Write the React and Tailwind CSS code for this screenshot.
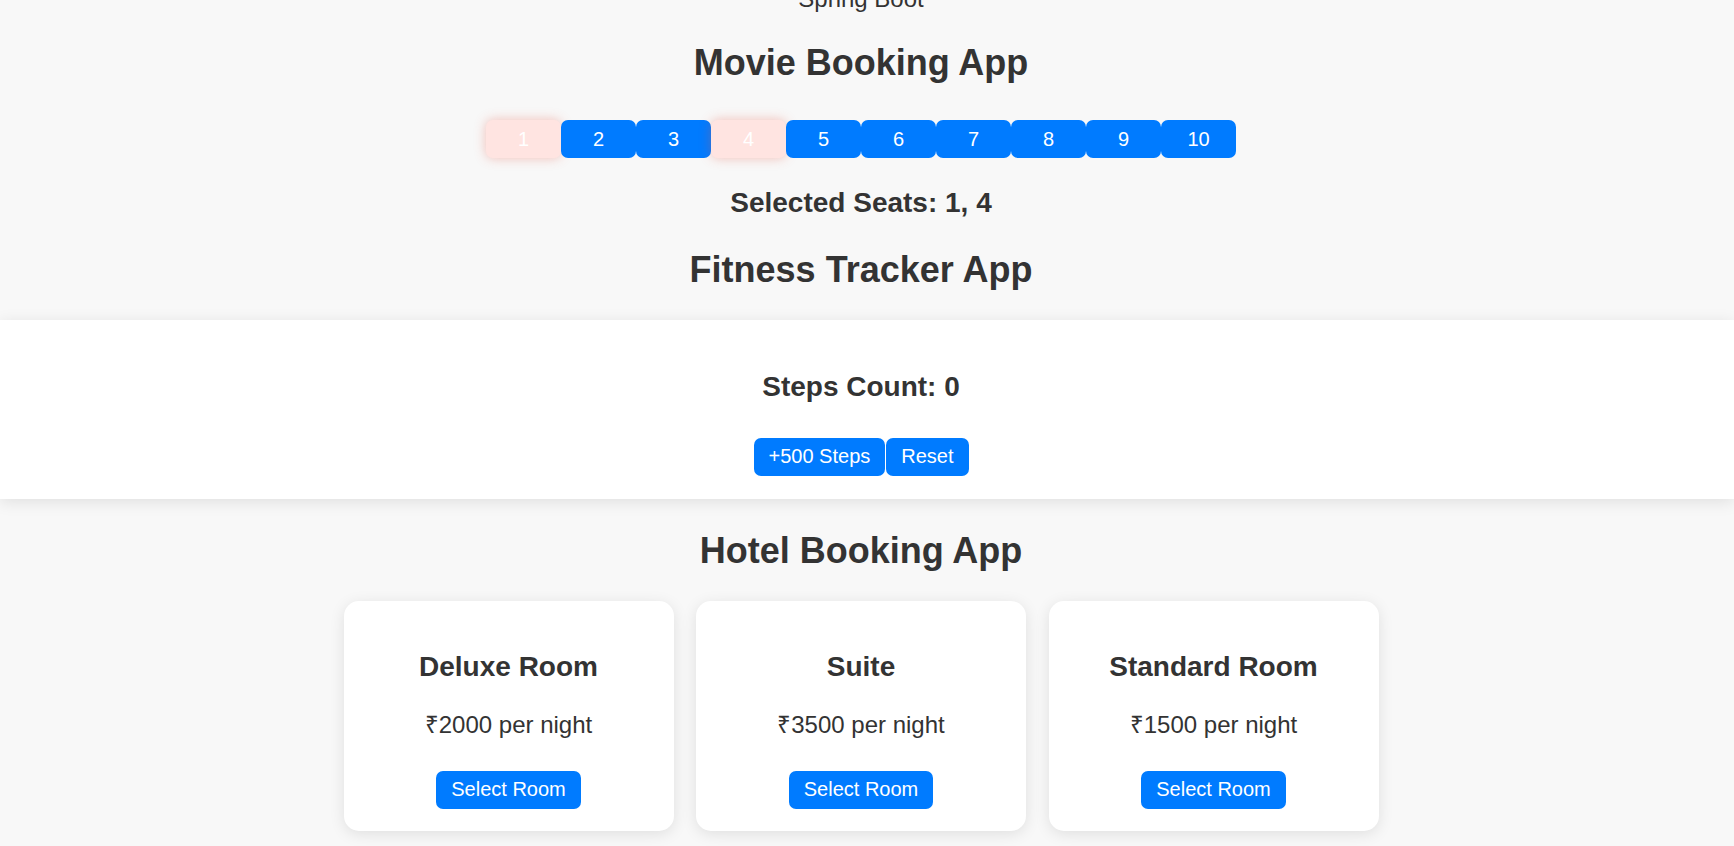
import React, { useState } from 'react';

const seats = [1, 2, 3, 4, 5, 6, 7, 8, 9, 10];

const rooms = [
  { name: 'Deluxe Room', price: 2000 },
  { name: 'Suite', price: 3500 },
  { name: 'Standard Room', price: 1500 },
];

const blueBtn = 'bg-[#007bff] text-white text-[20px] leading-[23px] px-[15px] py-[7.5px] rounded-[7px] cursor-pointer';

export default function App() {
  const [selected, setSelected] = useState([1, 4]);
  const [steps, setSteps] = useState(0);

  const toggle = (n) => {
    setSelected((cur) => (cur.includes(n) ? cur.filter((x) => x !== n) : [...cur, n].sort((a, b) => a - b)));
  };

  return (
    <div className="h-screen overflow-hidden bg-[#f8f8f8] text-[#333] font-['Liberation_Sans',Arial,sans-serif]">
      <div className="w-[1722px] text-center -mt-[15px]">
        <p className="text-[24px] leading-[27.6px]">Spring Boot</p>

        <h2 className="mt-[29px] text-[36px] leading-[41.4px] font-bold">Movie Booking App</h2>
        <div className="mt-[37px] flex justify-center">
          {seats.map((n) => {
            const on = selected.includes(n);
            return (
              <button
                key={n}
                onClick={() => toggle(n)}
                className={
                  on
                    ? 'w-[75px] h-[38px] rounded-[7px] text-[20px] text-white bg-[#ffe4e1] shadow-[0_0_12px_rgba(230,80,60,0.35)]'
                    : 'w-[75px] h-[38px] rounded-[7px] text-[20px] text-white bg-[#007bff]'
                }
              >
                {n}
              </button>
            );
          })}
        </div>
        <h3 className="mt-[28.5px] text-[28px] leading-[32.2px] font-bold">Selected Seats: {selected.join(', ')}</h3>

        <h2 className="mt-[30.5px] text-[36px] leading-[41.4px] font-bold">Fitness Tracker App</h2>
      </div>

      <div className="mt-[29.4px] w-[1734px] h-[179px] bg-white shadow-[0_3px_15px_rgba(0,0,0,0.1)]">
        <div className="w-[1722px] text-center pt-[22.5px]">
          <h3 className="mt-[28px] text-[28px] leading-[32.2px] font-bold">Steps Count: {steps}</h3>
          <div className="mt-[35px] flex justify-center gap-px">
            <button onClick={() => setSteps((s) => s + 500)} className={blueBtn}>+500 Steps</button>
            <button onClick={() => setSteps(0)} className={blueBtn}>Reset</button>
          </div>
        </div>
      </div>

      <div className="w-[1722px] text-center">
        <h2 className="mt-[31px] text-[36px] leading-[41.4px] font-bold">Hotel Booking App</h2>
        <div className="mt-[29.6px] flex justify-center gap-[22.5px]">
          {rooms.map((r) => (
            <div key={r.name} className="w-[330px] h-[230px] bg-white rounded-[15px] shadow-[0_3px_15px_rgba(0,0,0,0.1)] pt-[22.5px]">
              <h3 className="mt-[27px] text-[28px] leading-[32.2px] font-bold">{r.name}</h3>
              <p className="mt-[28px] text-[24px] leading-[27.6px]">₹{r.price} per night</p>
              <button className={`${blueBtn} mt-[32.4px]`}>Select Room</button>
            </div>
          ))}
        </div>
      </div>
    </div>
  );
}
